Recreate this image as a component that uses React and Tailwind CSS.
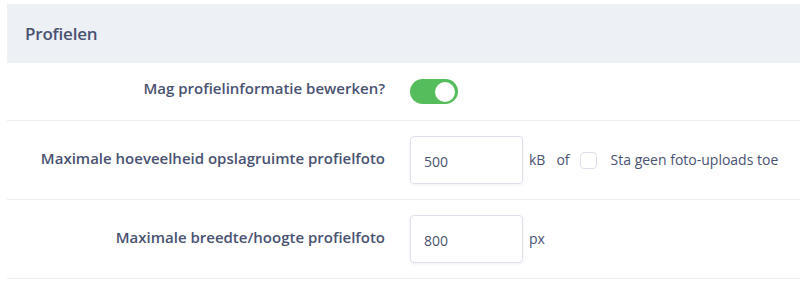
export default function App() {
  return (
    <div className="w-[800px] h-[286px] bg-white pt-[4px] pl-[7px] text-[#495272]" style={{ fontFamily: '"Open Sans", "Noto Sans", sans-serif' }}>
      <div className="h-[59px] bg-[#edf0f5] flex items-center pl-[18px]">
        <h2 className="text-[17px] font-semibold tracking-[-0.2px] mt-[1px]">Profielen</h2>
      </div>

      {/* Toggle row */}
      <div className="h-[58px] grid grid-cols-[378px_1fr] gap-x-[25px] items-center border-b border-[#eceef3]">
        <label className="text-right text-[15px] font-semibold -mt-[6px]">Mag profielinformatie bewerken?</label>
        <div>
          <button type="button" className="relative w-[48px] h-[25px] rounded-full bg-[#55bd5b] flex items-center">
            <span className="absolute right-[3px] w-[20px] h-[20px] rounded-full bg-white"></span>
          </button>
        </div>
      </div>

      {/* Storage row */}
      <div className="h-[79px] grid grid-cols-[378px_1fr] gap-x-[25px] items-center border-b border-[#eceef3]">
        <label className="text-right text-[15px] font-semibold -mt-[3px]">Maximale hoeveelheid opslagruimte profielfoto</label>
        <div className="flex items-center text-[14px]">
          <input
            type="text"
            defaultValue="500"
            className="w-[113px] h-[48px] rounded-[4px] border border-[#dde1ec] shadow-[0_1px_3px_rgba(60,70,110,0.08)] px-[13px] pt-[2px] text-[14px] text-[#495272] outline-none"
          />
          <span className="ml-[6px] -mt-[2px]">kB</span>
          <span className="ml-[11px] -mt-[2px]">of</span>
          <span className="ml-[10px] w-[17px] h-[17px] rounded-[4px] border border-[#dde0ea] bg-white"></span>
          <span className="ml-[14px] -mt-[2px]">Sta geen foto-uploads toe</span>
        </div>
      </div>

      {/* Dimension row */}
      <div className="h-[79px] grid grid-cols-[378px_1fr] gap-x-[25px] items-center border-b border-[#eceef3]">
        <label className="text-right text-[15px] font-semibold -mt-[3px]">Maximale breedte/hoogte profielfoto</label>
        <div className="flex items-center text-[14px]">
          <input
            type="text"
            defaultValue="800"
            className="w-[113px] h-[48px] rounded-[4px] border border-[#dde1ec] shadow-[0_1px_3px_rgba(60,70,110,0.08)] px-[13px] pt-[2px] text-[14px] text-[#495272] outline-none"
          />
          <span className="ml-[6px] -mt-[2px]">px</span>
        </div>
      </div>
    </div>
  )
}
